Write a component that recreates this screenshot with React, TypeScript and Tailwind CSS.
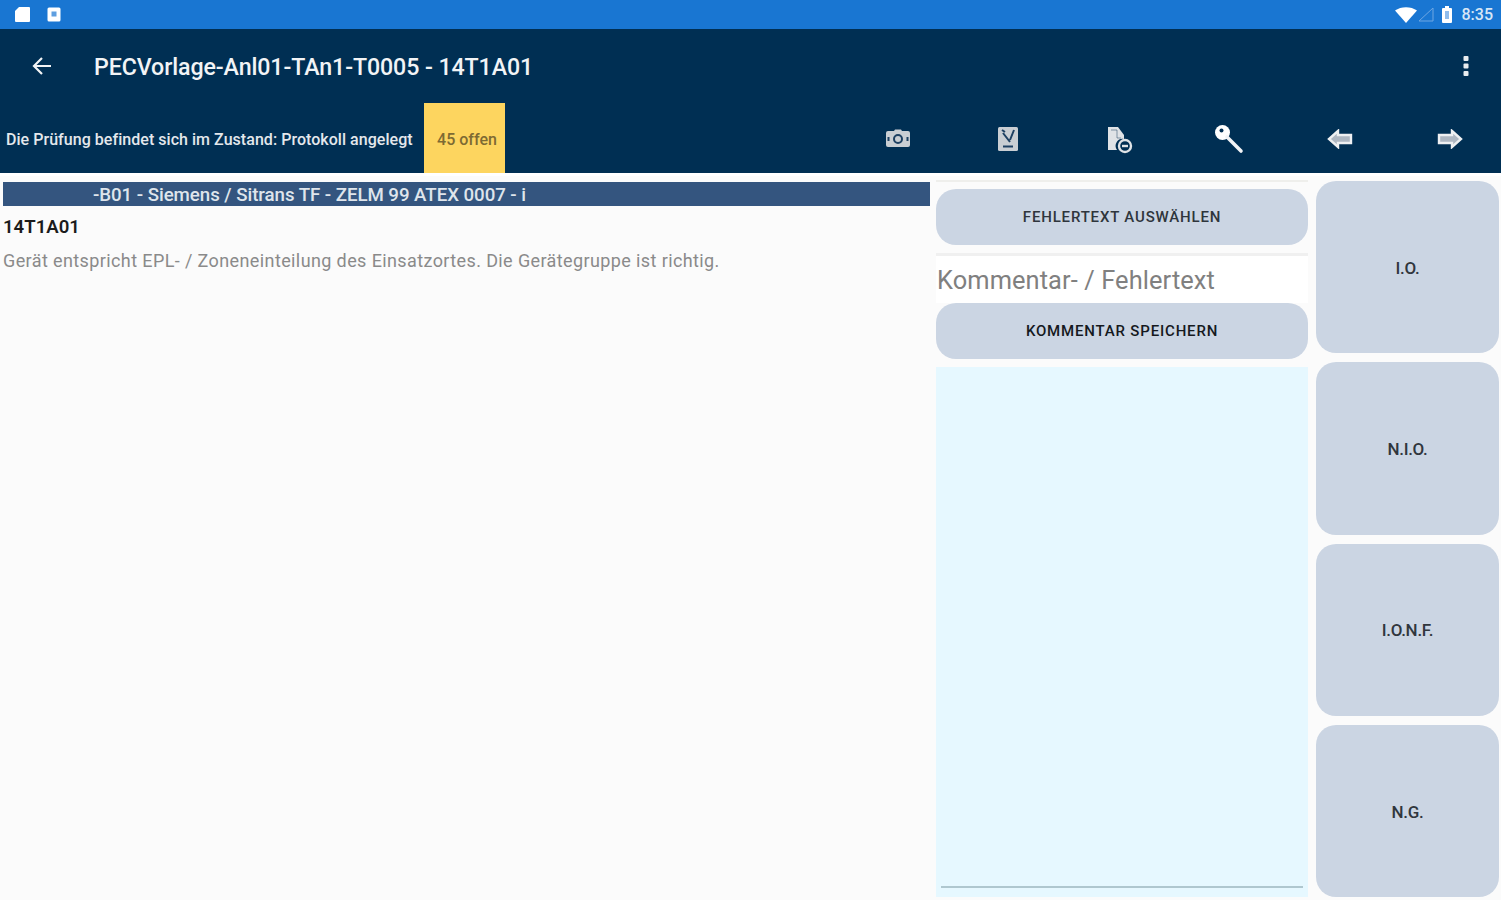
import React from "react";

const font = "[font-family:Roboto,'Liberation_Sans',sans-serif]";

function SideButton({ label }: { label: string }) {
  return (
    <button className="flex-1 min-h-0 rounded-[20px] bg-[#cbd5e3] pt-[3px] text-[17px] tracking-[-0.3px] font-medium text-[#30363d] flex items-center justify-center">
      {label}
    </button>
  );
}

function WideButton({ label, cls }: { label: string; cls: string }) {
  return (
    <button className={"h-[56px] w-full shrink-0 rounded-[20px] bg-[#cbd5e3] text-[15px] font-medium tracking-[0.82px] flex items-center justify-center " + cls}>
      {label}
    </button>
  );
}

function Tool({ children }: { children: React.ReactNode }) {
  return <div className="w-[32px] h-[32px] shrink-0 flex items-center justify-center">{children}</div>;
}

export default function App() {
  return (
    <div className={"w-[1501px] h-[900px] overflow-hidden flex flex-col bg-[#fbfbfb] " + font}>
      {/* status bar */}
      <div className="h-[29px] shrink-0 bg-[#1976d2] flex items-center pl-[14px] pr-[8px] gap-[16px]">
        <svg width="17" height="17" viewBox="0 0 17 17">
          <path d="M5 1h10a1 1 0 0 1 1 1v13a1 1 0 0 1-1 1H2a1 1 0 0 1-1-1V5z" fill="#fff" />
        </svg>
        <svg width="14" height="15" viewBox="0 0 14 15">
          <rect x="0.5" y="0.5" width="13" height="14" rx="1.5" fill="#fff" />
          <rect x="4.5" y="4.5" width="5" height="5" fill="#5f9fe0" />
        </svg>
        <div className="ml-auto flex items-center">
          <svg width="22" height="16" viewBox="0 0 22 16">
            <path d="M0 3.5C6-1 16-1 22 3.5L11 16z" fill="#fff" />
          </svg>
          <svg width="16" height="15" viewBox="0 0 16 15" className="ml-[1px]">
            <path d="M15 1v13H1z" fill="none" stroke="#6ea6e2" strokeWidth="1" />
          </svg>
          <svg width="10" height="17" viewBox="0 0 10 17" className="ml-[8px]">
            <path d="M3 0h4v2h2a1 1 0 0 1 1 1v13a1 1 0 0 1-1 1H1a1 1 0 0 1-1-1V3a1 1 0 0 1 1-1h2z" fill="#fff" />
            <rect x="3" y="5" width="4" height="8" fill="#8fbcec" />
          </svg>
          <span className="ml-[10px] text-[16px] font-medium text-[#d7e6f6]">8:35</span>
        </div>
      </div>

      {/* app bar */}
      <div className="h-[74px] shrink-0 bg-[#002f53] flex items-center pl-[30px] pr-[32px]">
        <svg width="24" height="24" viewBox="0 0 24 24" fill="none" stroke="#f2f4f6" strokeWidth="2.2">
          <path d="M21 12H4M12 4l-8 8 8 8" />
        </svg>
        <span className="ml-[40px] pt-[3px] text-[23.2px] leading-none font-medium text-[#f2f4f6] tracking-[-0.1px] whitespace-nowrap">
          PECVorlage-Anl01-TAn1-T0005 - 14T1A01
        </span>
        <svg width="6" height="22" viewBox="0 0 6 22" className="ml-auto" fill="#e8ecef">
          <rect x="0.5" y="1" width="5" height="5" rx="1" />
          <rect x="0.5" y="8.5" width="5" height="5" rx="1" />
          <rect x="0.5" y="16" width="5" height="5" rx="1" />
        </svg>
      </div>

      {/* toolbar */}
      <div className="h-[70px] shrink-0 bg-[#002f53] flex items-stretch pl-[6px]">
        <span className="self-center pt-[3px] w-[418px] text-[16px] font-medium tracking-[0.04px] text-[#e4e8ec] whitespace-nowrap">
          Die Prüfung befindet sich im Zustand: Protokoll angelegt
        </span>
        <div className="w-[81px] bg-[#fdd55f] flex items-center justify-center pl-[5px] pt-[3px] text-[16px] font-medium text-[#7d6a33] whitespace-nowrap">
          45 offen
        </div>
        <div className="ml-[377px] flex items-center gap-[78.4px] pt-[1px]">
          <Tool>
            <svg width="26" height="20" viewBox="0 0 26 20">
              <rect x="1" y="2" width="24" height="16" rx="2" fill="#c9ced3" />
              <path d="M9 2l1-1.5h6L17 2z" fill="#c9ced3" />
              <circle cx="13" cy="10" r="4" fill="none" stroke="#1d4062" strokeWidth="2" />
              <path d="M3.5 8v4M22.5 8v4" stroke="#1d4062" strokeWidth="2" />
            </svg>
          </Tool>
          <Tool>
            <svg width="22" height="26" viewBox="0 0 22 26">
              <rect x="1" y="1" width="20" height="24" rx="1.5" fill="#c9ced3" />
              <path d="M5 4l3 2M6 7l7 9M17 4l-4 10" stroke="#1d4062" strokeWidth="2" fill="none" />
              <path d="M6 20.5h10" stroke="#1d4062" strokeWidth="2" />
            </svg>
          </Tool>
          <Tool>
            <svg width="28" height="30" viewBox="0 0 28 30">
              <path d="M3 3h10l6 8v4a7 7 0 0 0-7 11H3z" fill="#dfe3e6" />
              <path d="M6 6h6v8h4" fill="none" stroke="#1d4062" strokeWidth="1" opacity="0.5" />
              <circle cx="20" cy="22" r="6" fill="none" stroke="#dfe3e6" strokeWidth="2.4" />
              <path d="M17 22h6" stroke="#dfe3e6" strokeWidth="2.4" />
            </svg>
          </Tool>
          <Tool>
            <svg width="32" height="32" viewBox="0 0 32 32">
              <circle cx="9.5" cy="9.5" r="7.5" fill="#fff" />
              <circle cx="8.5" cy="7.5" r="2" fill="#002f53" />
              <path d="M14 14l14 14" stroke="#f2f4f6" strokeWidth="3.6" strokeLinecap="round" />
            </svg>
          </Tool>
          <Tool>
            <svg width="26" height="20" viewBox="0 0 26 20" fill="#aeb7c2" stroke="#eef0f2" strokeWidth="2.4">
              <path d="M11 2L2 10l9 8v-4h13V6H11z" />
            </svg>
          </Tool>
          <Tool>
            <svg width="26" height="20" viewBox="0 0 26 20" fill="#aeb7c2" stroke="#eef0f2" strokeWidth="2.4">
              <path d="M15 2l9 8-9 8v-4H2V6h13z" />
            </svg>
          </Tool>
        </div>
      </div>

      {/* body */}
      <div className="flex-1 min-h-0 flex border-t-[3px] border-white pt-[5px] pl-[3px] pr-[2px] pb-[3px]">
        {/* left */}
        <div className="w-[927px] shrink-0 flex flex-col">
          <div className="mt-[1px] h-[24px] bg-[#34557f] pl-[90px] pt-[3px] flex items-center text-[18.7px] font-medium text-[#dfe5ec] whitespace-nowrap tracking-[-0.05px]">
            -B01 - Siemens / Sitrans TF - ZELM 99 ATEX 0007 - i
          </div>
          <div className="mt-[11px] text-[18.6px] leading-[21px] font-semibold text-[#1b1b1b]">14T1A01</div>
          <div className="mt-[12px] text-[18px] leading-[21px] text-[#8a8a8a] tracking-[0.39px] whitespace-nowrap">
            Gerät entspricht EPL- / Zoneneinteilung des Einsatzortes. Die Gerätegruppe ist richtig.
          </div>
        </div>

        {/* middle */}
        <div className="ml-[6px] w-[372px] shrink-0 flex flex-col">
          <div className="h-[2px] mt-[-1px] bg-[#efefec]" />
          <WideButton label="FEHLERTEXT AUSWÄHLEN" cls="mt-[7px] text-[#2f353c]" />
          <div className="mt-[8px] h-[3px] bg-[#f0f0f0]" />
          <div className="bg-white flex-none h-[47px] flex items-center pl-[1px] pt-[2px] text-[25.4px] text-[#808080] tracking-[0.1px] whitespace-nowrap">
            Kommentar- / Fehlertext
          </div>
          <WideButton label="KOMMENTAR SPEICHERN" cls="text-[#15191e]" />
          <div className="mt-[8px] flex-1 min-h-0 bg-[#e6f8ff] flex flex-col justify-end px-[5px] pb-[9px]">
            <div className="h-[2px] bg-[#afc7cf]" />
          </div>
        </div>

        {/* side */}
        <div className="ml-[8px] flex-1 min-w-0 flex flex-col gap-[9px]">
          <SideButton label="I.O." />
          <SideButton label="N.I.O." />
          <SideButton label="I.O.N.F." />
          <SideButton label="N.G." />
        </div>
      </div>
    </div>
  );
}
